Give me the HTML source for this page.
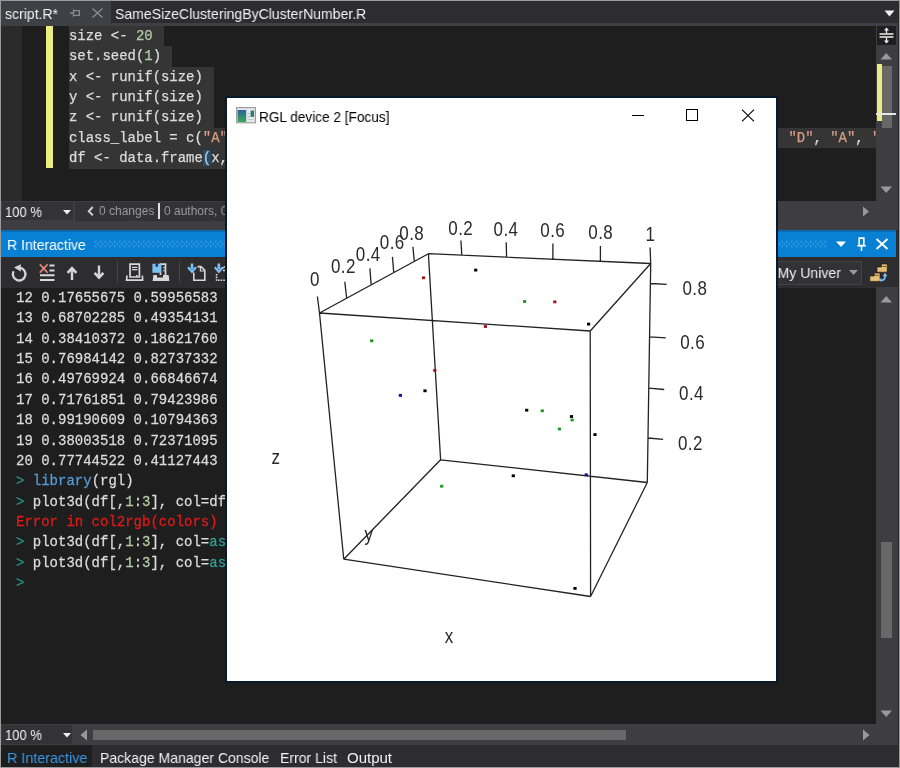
<!DOCTYPE html>
<html><head><meta charset="utf-8">
<style>
*{margin:0;padding:0;box-sizing:border-box}
html,body{width:900px;height:768px;overflow:hidden;background:#2d2d30}
body{position:relative;font-family:"Liberation Sans",sans-serif}
.mono,.ui,svg{will-change:transform}
.a{position:absolute}
.mono{font-family:"Liberation Mono",monospace;font-size:14px;white-space:pre;color:#dcdcdc;-webkit-text-stroke:0.25px currentColor}
.ui{font-family:"Liberation Sans",sans-serif;white-space:pre}
.line{position:absolute;height:20.36px;line-height:20.36px}
.sel{background:#353535;display:inline-block;height:20.36px;vertical-align:top;padding-right:2.5px}
.sx{transform-origin:0 0;display:inline-block}
#con .line{transform:scaleY(1.11);transform-origin:0 -5px}
</style></head><body>


<!-- ============ TAB BAR ============ -->
<div class="a" style="left:1px;top:1px;width:899px;height:22px;background:#2d2d30"></div>
<div class="a" style="left:1px;top:1px;width:110px;height:22px;background:#3f3f46"></div>
<div class="a ui sx" style="left:5px;top:4.5px;font-size:15px;line-height:18px;color:#f1f1f1;transform:scaleX(0.936)">script.R*</div>
<!-- pin -->
<svg class="a" style="left:69px;top:8px" width="12" height="10" viewBox="0 0 12 10"><path d="M1 5H4.5M4.5 1.2V8.8M4.5 2.6H10.4V7.4H4.5" fill="none" stroke="#8a8a8e" stroke-width="1.3"/></svg>
<!-- close -->
<svg class="a" style="left:91px;top:7px" width="13" height="12" viewBox="0 0 13 12"><path d="M1.5 1.5L11.5 10.5M11.5 1.5L1.5 10.5" stroke="#8a8a8e" stroke-width="1.4"/></svg>
<div class="a ui sx" style="left:115px;top:4.5px;font-size:15px;line-height:18px;color:#f1f1f1;transform:scaleX(0.936)">SameSizeClusteringByClusterNumber.R</div>
<svg class="a" style="left:884px;top:10px" width="11" height="7" viewBox="0 0 11 7"><path d="M0.5 0.5H10.5L5.5 6.5Z" fill="#f1f1f1"/></svg>
<div class="a" style="left:1px;top:23px;width:899px;height:3px;background:#3f3f46"></div>

<!-- ============ EDITOR ============ -->
<div class="a" style="left:1px;top:26px;width:875px;height:175px;background:#1e1e1e"></div>
<div class="a" style="left:1px;top:26px;width:21px;height:175px;background:#2a2a2a"></div>
<div class="a" style="left:46.4px;top:26px;width:6.4px;height:142px;background:#ecec80"></div>
<div id="ed" class="a mono" style="left:69px;top:26px;width:807px;height:175px;overflow:hidden;font-size:13.95px">
<div class="line" style="top:0"><span class="sel">size &lt;- <span style="color:#b5cea8">20</span> </span></div>
<div class="line" style="top:20.36px"><span class="sel">set.seed(<span style="color:#b5cea8">1</span>) </span></div>
<div class="line" style="top:40.72px"><span class="sel">x &lt;- runif(size) </span></div>
<div class="line" style="top:61.08px"><span class="sel">y &lt;- runif(size) </span></div>
<div class="line" style="top:81.44px"><span class="sel">z &lt;- runif(size) </span></div>
<div class="line" style="top:101.8px;width:807px" ><span class="sel" style="display:inline-block;width:807px">class_label = c(<span style="color:#d69d85">"A"</span>, <span style="color:#d69d85">"B"</span>, <span style="color:#d69d85">"C"</span>, <span style="color:#d69d85">"D"</span>, <span style="color:#d69d85">"A"</span>, <span style="color:#d69d85">"B"</span>, <span style="color:#d69d85">"C"</span>, <span style="color:#d69d85">"D"</span>, <span style="color:#d69d85">"A"</span>, <span style="color:#d69d85">"B"</span>, <span style="color:#d69d85">"C"</span>, <span style="color:#d69d85">"D"</span>, <span style="color:#d69d85">"A"</span>, <span style="color:#d69d85">"B"</span>, <span style="color:#d69d85">"D"</span>, <span style="color:#d69d85">"A"</span>, <span style="color:#d69d85">"C"</span></span></div>
<div class="line" style="top:122.16px"><span class="sel">df &lt;- data.frame<span style="background:#2b4a66;color:#b4d0ea">(</span>x, y, z, class_label) </span></div>
</div>

<!-- editor vertical scrollbar -->
<div class="a" style="left:876px;top:26px;width:20px;height:204px;background:#3e3e42"></div>
<div class="a" style="left:877px;top:26px;width:19px;height:19px;background:#1e1e1e"></div>
<svg class="a" style="left:877px;top:26px" width="19" height="19" viewBox="0 0 19 19"><path d="M2.5 8H16.5M2.5 11H16.5M9.5 2V7M9.5 12V17" stroke="#f1f1f1" stroke-width="1.3"/><path d="M7 4.5L9.5 1.5L12 4.5ZM7 14.5L9.5 17.5L12 14.5Z" fill="#f1f1f1"/></svg>
<svg class="a" style="left:880px;top:52px" width="13" height="8" viewBox="0 0 13 8"><path d="M0.5 7.5H12L6.25 1Z" fill="#999999"/></svg>
<div class="a" style="left:882px;top:66px;width:10px;height:62px;background:#686868"></div>
<div class="a" style="left:877px;top:64px;width:5px;height:57px;background:#ecec80"></div>
<div class="a" style="left:876px;top:113px;width:20px;height:2px;background:#e8e8e8"></div>
<svg class="a" style="left:880px;top:186px" width="13" height="8" viewBox="0 0 13 8"><path d="M0.5 0.5H12L6.25 7Z" fill="#999999"/></svg>
<div class="a" style="left:896px;top:23px;width:2px;height:207px;background:#3e3e42"></div>

<!-- editor bottom status bar -->
<div class="a" style="left:1px;top:201px;width:875px;height:29px;background:#3e3e42"></div>
<div class="a" style="left:2px;top:202px;width:71px;height:18px;background:#333337"></div>
<div class="a ui sx" style="left:5px;top:204px;font-size:14px;line-height:16px;color:#f1f1f1;transform:scaleX(0.93)">100 %</div>
<svg class="a" style="left:62.5px;top:210px" width="8" height="4.5" viewBox="0 0 8 4.5"><path d="M0 0H8L4 4.5Z" fill="#f1f1f1"/></svg>
<div class="a" style="left:75px;top:202px;width:660px;height:19px;background:#333337"></div>
<svg class="a" style="left:87px;top:205px" width="8" height="12" viewBox="0 0 8 12"><path d="M5.8 2L1.8 6.2L5.8 10.4" fill="none" stroke="#d0d0d0" stroke-width="2"/></svg>
<div class="a ui" style="left:99px;top:203px;font-size:12px;line-height:16px;color:#999999">0 changes</div>
<div class="a" style="left:158px;top:203px;width:2px;height:16px;background:#e0e0e0"></div>
<div class="a ui" style="left:164px;top:203px;font-size:12px;line-height:16px;color:#999999">0 authors, 0 changes</div>
<svg class="a" style="left:862px;top:206px" width="8" height="11" viewBox="0 0 8 11"><path d="M1 0.5V10.5L7 5.5Z" fill="#999999"/></svg>

<!-- ============ R INTERACTIVE ============ -->
<div class="a" style="left:1px;top:230px;width:895px;height:27px;background:#0880d4"></div>
<div class="a" style="left:1px;top:230px;width:895px;height:1.5px;background:#0a6cb2"></div>
<div class="a ui sx" style="left:7px;top:235.8px;font-size:15px;line-height:18px;color:#ffffff;transform:scaleX(0.936)">R Interactive</div>
<svg class="a" style="left:94px;top:239px" width="734" height="10" viewBox="0 0 734 10"><defs><pattern id="grip" x="0.8" y="1.6" width="4.8" height="5" patternUnits="userSpaceOnUse"><rect x="0" y="0" width="1.6" height="1.6" fill="#45a5ea"/><rect x="2.4" y="2.5" width="1.6" height="1.6" fill="#45a5ea"/></pattern></defs><rect x="0" y="1.5" width="733" height="7" fill="url(#grip)"/></svg>
<svg class="a" style="left:836px;top:241px" width="10" height="6" viewBox="0 0 10 6"><path d="M0 0.5H10L5 6Z" fill="#ffffff"/></svg>
<svg class="a" style="left:856px;top:236px" width="11" height="16" viewBox="0 0 11 16"><path d="M3.2 2.2H7.8V9.5H3.2Z" fill="none" stroke="#ffffff" stroke-width="1.7"/><path d="M1.2 9.8H9.8M5.5 9.8V15" fill="none" stroke="#ffffff" stroke-width="1.5"/></svg>
<svg class="a" style="left:875px;top:238px" width="14" height="12" viewBox="0 0 14 12"><path d="M1.5 1L12.5 11M12.5 1L1.5 11" stroke="#ffffff" stroke-width="1.9"/></svg>

<!-- toolbar -->
<div class="a" style="left:1px;top:257px;width:895px;height:31px;background:#2d2d30"></div>
<!-- reset icon -->
<svg class="a" style="left:10px;top:262px" width="20" height="21" viewBox="0 0 20 21"><path d="M9.6 5.9A6.3 6.3 0 1 1 3.6 9.2" fill="none" stroke="#d6d6d6" stroke-width="2.3"/><path d="M4 5.5L10.8 2.2V9.6Z" fill="#d6d6d6"/></svg>
<!-- clear icon -->
<svg class="a" style="left:38px;top:262px" width="18" height="20" viewBox="0 0 18 20"><path d="M11.5 3.5H16.5M11.5 8.4H16.5M2 13.3H16.5M2 18H16.5" stroke="#dadada" stroke-width="2"/><path d="M1.8 2.2L9.6 10.8M9.6 2.2L1.8 10.8" stroke="#e98a7e" stroke-width="1.7"/></svg>
<!-- up arrow -->
<svg class="a" style="left:66px;top:266px" width="12" height="15" viewBox="0 0 12 15"><path d="M6 2V14" stroke="#d6d6d6" stroke-width="2.4"/><path d="M1.6 6.8L6 2.2L10.4 6.8" fill="none" stroke="#d6d6d6" stroke-width="2.6"/></svg>
<!-- down arrow -->
<svg class="a" style="left:93px;top:265px" width="12" height="15" viewBox="0 0 12 15"><path d="M6 0.5V12.5" stroke="#d6d6d6" stroke-width="2.4"/><path d="M1.6 7.8L6 12.6L10.4 7.8" fill="none" stroke="#d6d6d6" stroke-width="2.6"/></svg>
<div class="a" style="left:117px;top:261px;width:1px;height:22px;background:#46464a"></div>
<!-- tower icon -->
<svg class="a" style="left:124px;top:262px" width="21" height="21" viewBox="0 0 21 21"><path d="M6 2.2H15.4V15H6Z" fill="none" stroke="#d8d8d8" stroke-width="1.7"/><path d="M8 5.4H13.4M8 7.6H13.4" stroke="#d8d8d8" stroke-width="1.3"/><rect x="12" y="13" width="1.6" height="1.6" fill="#d8d8d8"/><path d="M3 13.5L2.6 18.2H18.6L18.4 13.5" fill="none" stroke="#d8d8d8" stroke-width="1.7"/></svg>
<!-- floppy+tower icon -->
<svg class="a" style="left:151px;top:262px" width="20" height="21" viewBox="0 0 20 21"><path d="M9.5 2.2H14.5V15H9.5Z" fill="none" stroke="#d8d8d8" stroke-width="1.7"/><rect x="12.2" y="5" width="1.4" height="1.4" fill="#d8d8d8"/><rect x="12.2" y="8" width="1.4" height="1.4" fill="#d8d8d8"/><path d="M2.4 13H17.6L18.4 19H1.6Z" fill="#d8d8d8"/><path d="M6 13H12V15.5H6Z" fill="#2d2d30"/><rect x="1.4" y="1.8" width="8.6" height="9" fill="#7cc0f6"/><rect x="4.6" y="1.8" width="2.4" height="3" fill="#1c3550"/></svg>
<div class="a" style="left:179px;top:261px;width:1px;height:22px;background:#46464a"></div>
<!-- download doc icon -->
<svg class="a" style="left:187px;top:262px" width="20" height="20" viewBox="0 0 20 20"><path d="M6.8 10.5V18.3H17.8V8.4L14 4.6H10.5" fill="none" stroke="#d8d8d8" stroke-width="1.6"/><path d="M13.4 4.8V9H17.6" fill="none" stroke="#d8d8d8" stroke-width="1.2"/><path d="M5 1.5V7" stroke="#7cc0f6" stroke-width="2.6"/><path d="M1 5.2L5 9.8L9 5.2" fill="none" stroke="#7cc0f6" stroke-width="2.2"/></svg>
<svg class="a" style="left:213px;top:262px" width="13" height="20" viewBox="0 0 13 20"><path d="M3.6 12V18.3H13" fill="none" stroke="#d8d8d8" stroke-width="1.6" stroke-dasharray="1.6 1"/><path d="M5.8 1.5V7" stroke="#7cc0f6" stroke-width="2.6"/><path d="M1.8 5.2L5.8 9.8L9.8 5.2" fill="none" stroke="#7cc0f6" stroke-width="2.2"/><path d="M10 6L13 4M10 8.5H13" stroke="#d8d8d8" stroke-width="1.4"/></svg>
<!-- workspace dropdown -->
<div class="a" style="left:700px;top:261px;width:162px;height:24px;background:#333337;border:1px solid #434346"></div>
<div class="a ui sx" style="left:775px;top:264px;font-size:15px;line-height:18px;color:#f1f1f1;transform:scaleX(0.936)">'My Univer</div>
<svg class="a" style="left:849px;top:270px" width="9" height="5" viewBox="0 0 9 5"><path d="M0 0H9L4.5 5Z" fill="#999999"/></svg>
<svg class="a" style="left:864px;top:258px" width="30" height="28" viewBox="0 0 30 28"><path d="M13 9H17.5V6H23.2V14.2H13Z" fill="#e6bd78" stroke="#1a1208" stroke-width="0.6"/><path d="M18.5 8.5H22" stroke="#6b4a1a" stroke-width="0.9"/><path d="M5.8 18H10.3V15H16V23.4H5.8Z" fill="#e6bd78" stroke="#1a1208" stroke-width="0.6"/><path d="M11.3 17.3H14.8" stroke="#6b4a1a" stroke-width="0.9"/><path d="M16.3 22.3C19.5 22.8 21.5 21 21 17.2" fill="none" stroke="#1e2a40" stroke-width="3.2"/><path d="M16.3 22.3C19.5 22.8 21.5 21 21 17.2" fill="none" stroke="#7ec2f4" stroke-width="1.7"/><path d="M18.6 18.2L21 14.8L23.4 18.2Z" fill="#7ec2f4"/><path d="M14.6 21L16.6 23.8L17.6 20.6Z" fill="#7ec2f4"/></svg>

<!-- console -->
<div class="a" style="left:1px;top:288px;width:875px;height:436px;background:#1e1e1e"></div>
<div id="con" class="a mono" style="left:16px;top:286.4px;width:860px;height:437px;overflow:hidden">
<div class="line" style="top:0px">12 0.17655675 0.59956583 0.27838371</div>
<div class="line" style="top:20.36px">13 0.68702285 0.49354131 0.34845760</div>
<div class="line" style="top:40.72px">14 0.38410372 0.18621760 0.58718964</div>
<div class="line" style="top:61.08px">15 0.76984142 0.82737332 0.49843016</div>
<div class="line" style="top:81.44px">16 0.49769924 0.66846674 0.77273107</div>
<div class="line" style="top:101.8px">17 0.71761851 0.79423986 0.87574952</div>
<div class="line" style="top:122.16px">18 0.99190609 0.10794363 0.42036918</div>
<div class="line" style="top:142.52px">19 0.38003518 0.72371095 0.30109926</div>
<div class="line" style="top:162.88px">20 0.77744522 0.41127443 0.52306266</div>
<div class="line" style="top:183.24px"><span style="color:#2b8f88">&gt;</span> <span style="color:#569cd6">library</span>(rgl)</div>
<div class="line" style="top:203.6px"><span style="color:#2b8f88">&gt;</span> plot3d(df[,<span style="color:#b5cea8">1</span>:<span style="color:#b5cea8">3</span>], col=df$class_label)</div>
<div class="line" style="top:223.96px;color:#e51a1a">Error in col2rgb(colors) : invalid color name 'A'</div>
<div class="line" style="top:244.32px"><span style="color:#2b8f88">&gt;</span> plot3d(df[,<span style="color:#b5cea8">1</span>:<span style="color:#b5cea8">3</span>], col=<span style="color:#2fa096">as</span>.numeric(df$class_label))</div>
<div class="line" style="top:264.68px"><span style="color:#2b8f88">&gt;</span> plot3d(df[,<span style="color:#b5cea8">1</span>:<span style="color:#b5cea8">3</span>], col=<span style="color:#2fa096">as</span>.numeric(df$class_label))</div>
<div class="line" style="top:285.04px"><span style="color:#2b8f88">&gt;</span></div>
</div>
<!-- console v scrollbar -->
<div class="a" style="left:876px;top:287px;width:22px;height:458px;background:#3e3e42"></div>
<svg class="a" style="left:880px;top:295px" width="13" height="8" viewBox="0 0 13 8"><path d="M0.5 7.5H12L6.25 1Z" fill="#999999"/></svg>
<div class="a" style="left:881px;top:542px;width:11px;height:96px;background:#686868"></div>
<svg class="a" style="left:880px;top:710px" width="13" height="8" viewBox="0 0 13 8"><path d="M0.5 0.5H12L6.25 7Z" fill="#999999"/></svg>

<!-- console bottom bar -->
<div class="a" style="left:1px;top:724px;width:895px;height:21px;background:#3e3e42"></div>
<div class="a" style="left:2px;top:724.5px;width:70px;height:19.5px;background:#333337"></div>
<div class="a ui sx" style="left:5px;top:727px;font-size:14px;line-height:16px;color:#f1f1f1;transform:scaleX(0.93)">100 %</div>
<svg class="a" style="left:62.5px;top:733px" width="8" height="4.5" viewBox="0 0 8 4.5"><path d="M0 0H8L4 4.5Z" fill="#f1f1f1"/></svg>
<svg class="a" style="left:80px;top:729px" width="8" height="12" viewBox="0 0 8 12"><path d="M7 0.5V11.5L0.5 6Z" fill="#999999"/></svg>
<div class="a" style="left:93px;top:730px;width:533px;height:10px;background:#686868"></div>
<svg class="a" style="left:862px;top:729px" width="8" height="12" viewBox="0 0 8 12"><path d="M1 0.5V11.5L7.5 6Z" fill="#999999"/></svg>

<!-- bottom tabs -->
<div class="a" style="left:1px;top:745px;width:899px;height:23px;background:#2d2d30"></div>
<div class="a" style="left:1px;top:745px;width:91px;height:23px;background:#1e1e1e"></div>
<div class="a ui sx" style="left:7px;top:749px;font-size:15px;line-height:18px;color:#3a98e6;transform:scaleX(0.955)">R Interactive</div>
<div class="a ui sx" style="left:100px;top:749px;font-size:15px;line-height:18px;color:#f1f1f1;transform:scaleX(0.936)">Package Manager Console</div>
<div class="a ui sx" style="left:280px;top:749px;font-size:15px;line-height:18px;color:#f1f1f1;transform:scaleX(0.936)">Error List</div>
<div class="a ui sx" style="left:347px;top:749px;font-size:15px;line-height:18px;color:#f1f1f1;transform:scaleX(1.0)">Output</div>

<!-- window frame lines -->
<div class="a" style="left:0;top:0;width:900px;height:1px;background:#9a9a9a"></div>
<div class="a" style="left:0;top:0;width:1px;height:768px;background:#9a9a9a"></div>
<div class="a" style="left:898px;top:1px;width:1px;height:766px;background:#2a2a2c"></div>
<div class="a" style="left:899px;top:0;width:1px;height:768px;background:#9a9a9a"></div>
<div class="a" style="left:0;top:767px;width:900px;height:1px;background:#9a9a9a"></div>
<!-- ============ RGL WINDOW ============ -->
<div class="a" style="left:224.8px;top:95.8px;width:553.2px;height:587.2px;background:#ffffff;border:2px solid #061a2c"></div>
<svg class="a" style="left:236px;top:107px" width="20" height="16.5" viewBox="0 0 20 16.5"><defs><linearGradient id="ig" x1="0" y1="0" x2="0" y2="1"><stop offset="0" stop-color="#2f5f98"/><stop offset="1" stop-color="#3aaa5a"/></linearGradient></defs><rect x="0.6" y="0.6" width="18.8" height="15.2" fill="#e4e8ea" stroke="#9a9a9a" stroke-width="1.1"/><rect x="1.6" y="3" width="8.6" height="12" fill="url(#ig)"/><rect x="14.6" y="3.6" width="3.4" height="6.2" fill="#2e7a78"/><rect x="11.4" y="6" width="2.6" height="1" fill="#c0b8c0"/><rect x="11.4" y="9" width="2.6" height="1" fill="#c0b8c0"/><rect x="11.4" y="12" width="6" height="1" fill="#c8c8c8"/></svg>
<div class="a ui sx" style="left:259.3px;top:107.6px;font-size:14.2px;line-height:18px;color:#000000;transform:scaleX(0.96)">RGL device 2 [Focus]</div>
<div class="a" style="left:632px;top:115px;width:12px;height:1px;background:#000"></div>
<div class="a" style="left:686px;top:109px;width:12px;height:12px;border:1px solid #000"></div>
<svg class="a" style="left:741px;top:109px" width="14" height="13" viewBox="0 0 14 13"><path d="M1 0.6L13 12.4M13 0.6L1 12.4" stroke="#000" stroke-width="1.1"/></svg>

<!-- plot -->
<svg class="a" style="left:0;top:0" width="900" height="768" viewBox="0 0 900 768">
<path d="M319.5 313L590.2 331M590.2 331L650.7 263.5M650.7 263.5L428.4 253.7M428.4 253.7L319.5 313M343.75 559.2L590.6 596.5M590.6 596.5L647.3 482.5M647.3 482.5L440.6 459.8M440.6 459.8L343.75 559.2M319.5 313L343.75 559.2M590.2 331L590.6 596.5M650.7 263.5L647.3 482.5M428.4 253.7L440.6 459.8M319.5 313L317.4 296.5M346.6 297.8L344.8 281.8M371.1 284.1L369.9 268.4M393.7 272L392.4 256.9M414.3 261.3L412.9 246.8M461.8 254.8L460.9 240.5M506.6 256.9L506.2 242.3M552.9 259L552.9 243.6M600.4 261.3L600.4 245.9M650.7 263.5L650.1 247.6M650.7 283.5L666.7 284.4M649.8 336.8L665.8 337.9M649.3 388.2L664.2 389.5M648.4 438L663 439.3" fill="none" stroke="#222" stroke-width="1.3"/>
<g font-family="Liberation Sans" font-size="20" fill="#2a2a2a" text-anchor="middle" letter-spacing="0.5">
<text transform="translate(314.9 286.4) scale(0.85 1.04)">0</text>
<text transform="translate(343.4 272.7) scale(0.85 1.04)">0.2</text>
<text transform="translate(368.3 260.6) scale(0.85 1.04)">0.4</text>
<text transform="translate(392.3 249.1) scale(0.85 1.04)">0.6</text>
<text transform="translate(411.7 240.2) scale(0.85 1.04)">0.8</text>
<text transform="translate(460.7 234.8) scale(0.85 1.04)">0.2</text>
<text transform="translate(506.0 235.7) scale(0.85 1.04)">0.4</text>
<text transform="translate(552.7 237.0) scale(0.85 1.04)">0.6</text>
<text transform="translate(600.7 239.3) scale(0.85 1.04)">0.8</text>
<text transform="translate(650.5 241.1) scale(0.85 1.04)">1</text>
<text transform="translate(694.9 294.5) scale(0.85 1.04)">0.8</text>
<text transform="translate(692.6 348.5) scale(0.85 1.04)">0.6</text>
<text transform="translate(691.5 399.7) scale(0.85 1.04)">0.4</text>
<text transform="translate(690.4 450.2) scale(0.85 1.04)">0.2</text>
<text transform="translate(275.9 463.6) scale(0.85 1.04)">z</text><text transform="translate(449.3 642.9) scale(0.85 1.04)">x</text><text transform="translate(369.0 541) scale(0.85 1.04)">y</text>
</g>
<rect x="421.9" y="276.4" width="3.2" height="2.8" fill="#a01020"/>
<rect x="474.1" y="268.7" width="3.2" height="2.8" fill="#000000"/>
<rect x="523.0" y="300.1" width="3.2" height="2.8" fill="#1e9a1e"/>
<rect x="553.2" y="300.5" width="3.2" height="2.8" fill="#a01020"/>
<rect x="483.8" y="325.1" width="3.2" height="2.8" fill="#a01020"/>
<rect x="587.0" y="322.7" width="3.2" height="2.8" fill="#000000"/>
<rect x="370.1" y="339.4" width="3.2" height="2.8" fill="#1e9a1e"/>
<rect x="433.2" y="369.0" width="3.2" height="2.8" fill="#a01020"/>
<rect x="423.4" y="389.4" width="3.2" height="2.8" fill="#000000"/>
<rect x="398.8" y="394.0" width="3.2" height="2.8" fill="#1010a0"/>
<rect x="525.1" y="408.8" width="3.2" height="2.8" fill="#000000"/>
<rect x="540.7" y="409.4" width="3.2" height="2.8" fill="#1e9a1e"/>
<rect x="569.9" y="415.1" width="3.2" height="2.8" fill="#000000"/>
<rect x="570.5" y="418.6" width="3.2" height="2.8" fill="#1e9a1e"/>
<rect x="557.8" y="427.6" width="3.2" height="2.8" fill="#1e9a1e"/>
<rect x="593.4" y="433.2" width="3.2" height="2.8" fill="#000000"/>
<rect x="440.1" y="484.85" width="3.2" height="2.8" fill="#1e9a1e"/>
<rect x="511.7" y="474.4" width="3.2" height="2.8" fill="#000000"/>
<rect x="584.65" y="473.4" width="3.2" height="2.8" fill="#1010a0"/>
<rect x="573.4" y="587.0" width="3.2" height="2.8" fill="#000000"/>
</svg>
</body></html>
